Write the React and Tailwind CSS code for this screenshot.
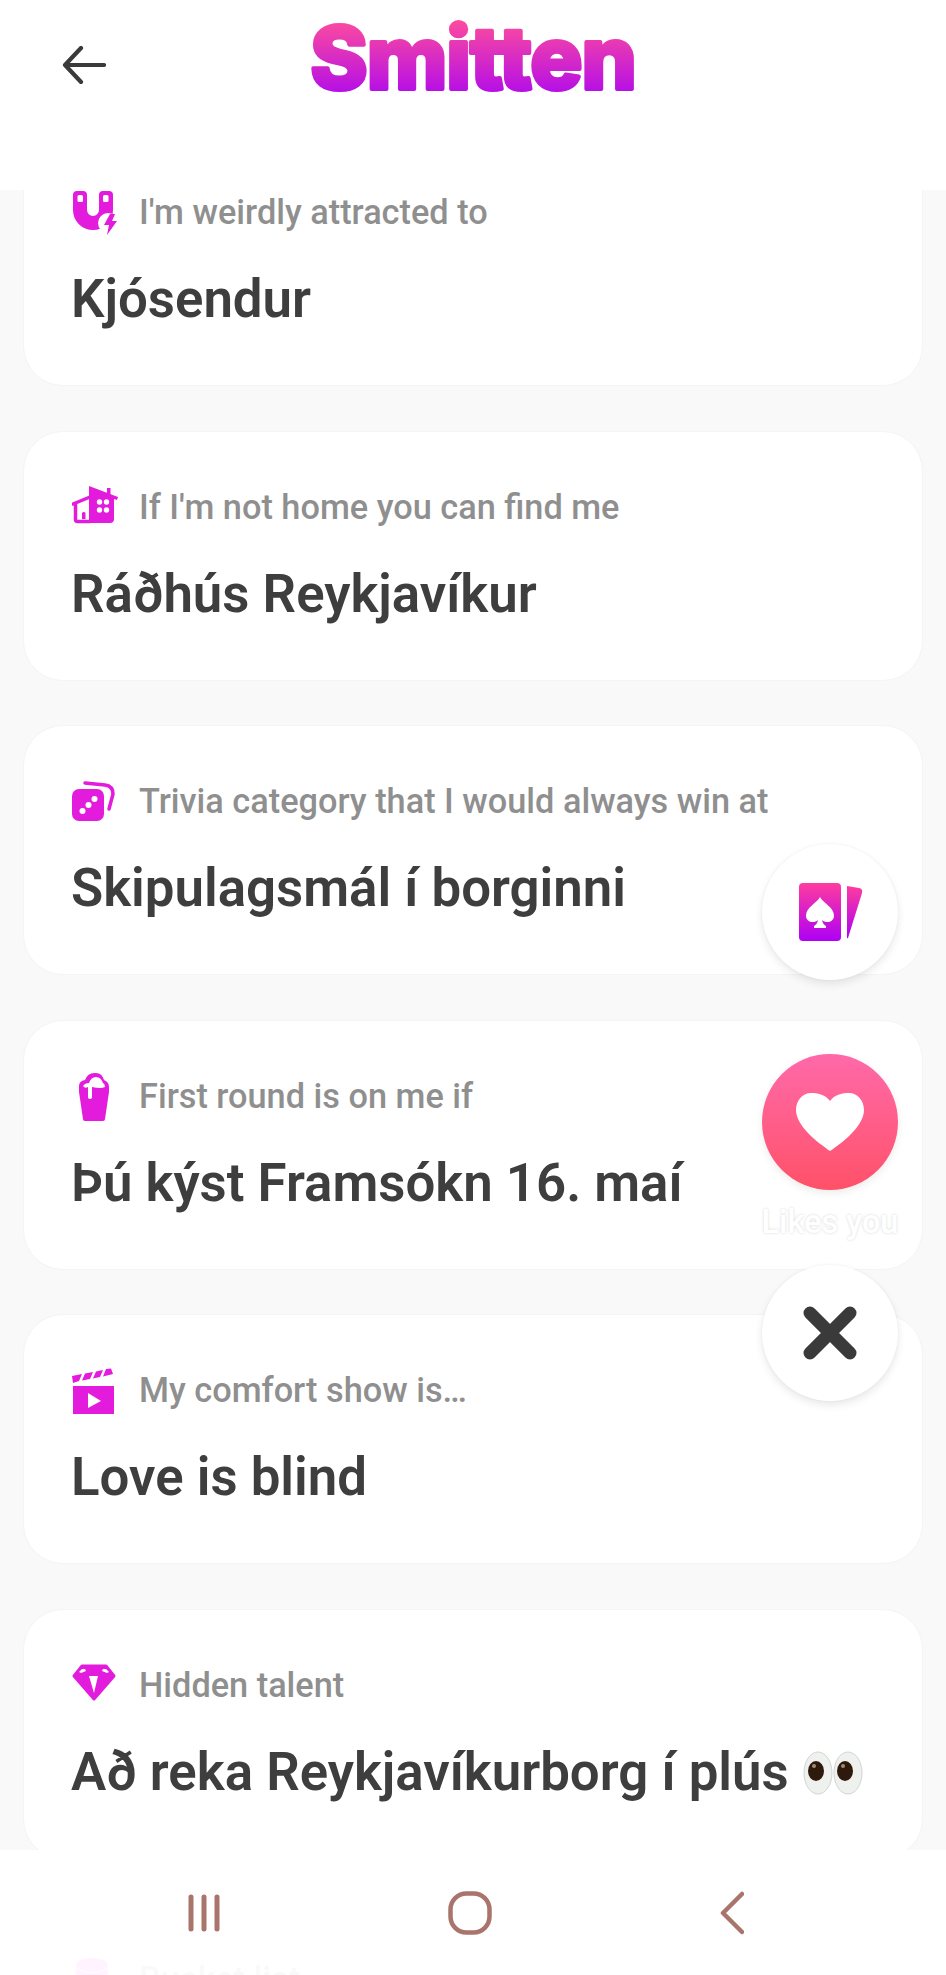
import React from 'react';

const pink = '#e31bdc';

function MagnetIcon() {
  return (
    <svg width="46" height="46" viewBox="0 0 46 46" fill={pink}>
      <path d="M1 5a4 4 0 0 1 4-4h6a4 4 0 0 1 4 4v15a6 6 0 0 0 12 0V5a4 4 0 0 1 4-4h6a4 4 0 0 1 4 4v15a20 20 0 0 1-40 0z" />
      <rect x="5.500" y="5" width="5.500" height="7" rx="1.500" fill="#fff" />
      <rect x="31" y="5" width="5.500" height="7" rx="1.500" fill="#fff" />
      <circle cx="36" cy="33" r="10" fill="#fff" />
      <path d="M38 24l-6 11h5l-2 10 10-14h-5l3-7z" />
    </svg>
  );
}

function HouseIcon() {
  return (
    <svg width="46" height="46" viewBox="0 0 46 46" fill={pink}>
      <path d="M17 1l29 11-1 3-3-1v20a4 4 0 0 1-4 4H17z" />
      <rect x="35" y="3" width="3.500" height="8" />
      <path d="M1 19l17-7M3.500 18v16.500a2 2 0 0 0 2 2H18" fill="none" stroke={pink} strokeWidth="3.500" strokeLinecap="round" />
      <path d="M10 34v-6a2 2 0 0 1 3.500 0v6z" />
      <g fill="#fff">
        <circle cx="27.500" cy="17" r="2.700" />
        <circle cx="34.500" cy="17" r="2.700" />
        <circle cx="27.500" cy="25" r="2.700" />
        <circle cx="34.500" cy="25" r="2.700" />
      </g>
    </svg>
  );
}

function DiceIcon() {
  return (
    <svg width="46" height="46" viewBox="0 0 46 46" fill={pink}>
      <path d="M13 4l20 2q8 1 8 9l-4 15" fill="none" stroke={pink} strokeWidth="3.500" strokeLinecap="round" />
      <rect x="0" y="10" width="32" height="32" rx="7" />
      <g fill="#fff">
        <circle cx="10.500" cy="32" r="3" />
        <circle cx="16.500" cy="26" r="3" />
        <circle cx="22.500" cy="20" r="3" />
      </g>
    </svg>
  );
}

function BeerIcon() {
  return (
    <svg width="31" height="49" viewBox="0 0 31 49" fill={pink} className="ml-[6px]">
      <path d="M1 14q0-5 6-6 3-8 11-7 6 0 8 7 5 2 5 7v5l-4 27q0 2-2 2H7q-2 0-2-2L1 20z" />
      <path d="M5 14q2-3 6-3 2-6 7-6t7 6q2 1 2 4-4 2-13 0v11q-2 2-4 0V15q-3 2-5-1z" fill="#fff" />
    </svg>
  );
}

function ClapperIcon() {
  return (
    <svg width="46" height="46" viewBox="0 0 46 46" fill={pink}>
      <rect x="1" y="18" width="41" height="28" />
      <path d="M16 25l13 8-13 7z" fill="#fff" />
      <path d="M0 8l10-2-3 7-6 2zM13 5.500l8-1.500-3 7-8 1.500zM24 3.500l7-1.500-3 7-7 1.500zM34 1l5-.5 2 5.500-10 2.500z" />
    </svg>
  );
}

function GemIcon() {
  return (
    <svg width="46" height="46" viewBox="0 0 46 46" fill={pink}>
      <path d="M10 3h24l8 10-20 23L2 13z" stroke={pink} strokeWidth="3" strokeLinejoin="round" />
      <g fill="#fff">
        <path d="M10 6h3l1 2-5 2-2-1z" />
        <path d="M31 6h3l3 3-2 1-5-2z" />
        <path d="M17 13h9l-4 17z" />
      </g>
    </svg>
  );
}

function BucketIcon() {
  return (
    <svg width="46" height="46" viewBox="0 0 46 46" fill={pink}>
      <ellipse cx="20" cy="8" rx="16" ry="7" />
      <path d="M4 12q16 8 32 0v26q-16 8-32 0z" />
    </svg>
  );
}

function EyesEmoji() {
  return (
    <svg width="60" height="44" viewBox="0 0 60 44" className="ml-[14px] shrink-0">
      <ellipse cx="15" cy="22" rx="14" ry="21" fill="#eef1ee" stroke="#cfd6d2" />
      <ellipse cx="45" cy="22" rx="14" ry="21" fill="#eef1ee" stroke="#cfd6d2" />
      <ellipse cx="13" cy="20" rx="8" ry="10" fill="#2e1a0c" />
      <ellipse cx="42" cy="20" rx="8" ry="10" fill="#2e1a0c" />
      <circle cx="11" cy="15" r="2" fill="#a78a72" />
      <circle cx="40" cy="15" r="2" fill="#a78a72" />
    </svg>
  );
}

const prompts = [
  { label: "I'm weirdly attracted to", value: 'Kjósendur', icon: <MagnetIcon /> },
  { label: "If I'm not home you can find me", value: 'Ráðhús Reykjavíkur', icon: <HouseIcon /> },
  { label: 'Trivia category that I would always win at', value: 'Skipulagsmál í borginni', icon: <DiceIcon /> },
  { label: 'First round is on me if', value: 'Þú kýst Framsókn 16. maí', icon: <BeerIcon /> },
  { label: 'My comfort show is…', value: 'Love is blind', icon: <ClapperIcon /> },
  { label: 'Hidden talent', value: 'Að reka Reykjavíkurborg í plús', icon: <GemIcon />, emoji: true },
  { label: 'Bucket list', value: '', icon: <BucketIcon /> },
];

function PromptCard({ item }) {
  return (
    <div className="h-[250px] shrink-0 rounded-[40px] border border-[#f4f4f4] bg-white pl-[48px] pr-[47px] pt-[53px]">
      <div className="flex h-[46px] items-center gap-[21px]">
        <div className="flex w-[46px] shrink-0 justify-start">{item.icon}</div>
        <span className="text-[34.300px] font-medium text-[#8f8f8f]">{item.label}</span>
      </div>
      <div className="-ml-px mt-[34px] flex h-[60px] items-center text-[52.800px] font-semibold text-[#3e3e3e]">
        <span>{item.value}</span>
        {item.emoji && <EyesEmoji />}
      </div>
    </div>
  );
}

export default function App() {
  return (
    <div className="relative flex h-[1975px] w-[946px] flex-col overflow-hidden bg-[#f9f9f9] font-['Roboto',sans-serif]">
      {/* Header */}
      <header className="grid h-[190px] shrink-0 grid-cols-[1fr_auto_1fr] bg-white">
        <button className="ml-[62px] mt-[46px] h-[38px] w-[44px]">
          <svg width="44" height="38" viewBox="0 0 44 38" fill="none" stroke="#3a3a3a" strokeWidth="4.200" strokeLinecap="round" strokeLinejoin="round">
            <path d="M42 19H3M19 2L3 19l16 17" />
          </svg>
        </button>
        <svg width="370" height="110" viewBox="0 0 370 110">
          <defs>
            <linearGradient id="logo" gradientUnits="userSpaceOnUse" x1="0" y1="22" x2="0" y2="92">
              <stop offset="0" stopColor="#fb4aa0" />
              <stop offset="1" stopColor="#b60fe6" />
            </linearGradient>
          </defs>
          <text x="185" y="89" textAnchor="middle" fontFamily="Inter, sans-serif" fontWeight="800" fontSize="87" letterSpacing="-1" fill="url(#logo)" stroke="url(#logo)" strokeWidth="4" strokeLinejoin="round">Smitten</text>
        </svg>
        <div />
      </header>

      {/* Prompt list, scrolled */}
      <div className="min-h-0 flex-1 overflow-hidden">
        <div className="-mt-[54px] flex flex-col gap-[44.500px] pl-[23px] pr-[23px]">
          {prompts.map((item) => (
            <PromptCard key={item.label} item={item} />
          ))}
        </div>
      </div>

      {/* Floating actions */}
      <div className="absolute left-[762px] top-[844px] flex w-[136px] flex-col items-center">
        <button className="flex h-[136px] w-[136px] items-center justify-center rounded-full bg-white shadow-[0_4px_8px_rgba(0,0,0,0.09),0_0_3px_rgba(0,0,0,0.05)]">
          <svg width="64" height="58" viewBox="0 0 64 58" className="ml-[2px]">
            <defs>
              <linearGradient id="cards" x1="0" y1="0" x2="0" y2="1">
                <stop offset="0" stopColor="#ff3c9f" />
                <stop offset="1" stopColor="#ae00f5" />
              </linearGradient>
            </defs>
            <path fillRule="evenodd" fill="url(#cards)" d="M4 0h34a4 4 0 0 1 4 4v50a4 4 0 0 1-4 4H4a4 4 0 0 1-4-4V4a4 4 0 0 1 4-4zM21 14c-3 6-14 10-14 19 0 6 8 8 12 4-.5 3-2 5-4 6v2h12v-2c-2-1-3.500-3-4-6 4 4 12 2 12-4 0-9-11-13-14-19z" />
            <path fill="url(#cards)" d="M48 3l12 2q4 .5 3 5L49 55q-1 1-1-1z" />
          </svg>
        </button>
        <button className="mt-[74px] flex h-[136px] w-[136px] items-center justify-center rounded-full bg-gradient-to-b from-[#ff69a9] to-[#ff5068] shadow-[0_3px_8px_rgba(0,0,0,0.08)]">
          <svg width="68" height="58" viewBox="0 0 68 58" fill="#fff">
            <path d="M34 8C29 1 21 0 15 0 6 0 0 8 0 17c0 16 22 33 34 41 12-8 34-25 34-41 0-9-6-17-15-17-6 0-14 1-19 8z" />
          </svg>
        </button>
        <span className="mt-[14px] whitespace-nowrap text-[32.500px] font-medium leading-[36px] text-white [text-shadow:0_0_3px_rgba(0,0,0,0.16)]">Likes you</span>
        <button className="mt-[25px] flex h-[136px] w-[136px] items-center justify-center rounded-full bg-white shadow-[0_4px_8px_rgba(0,0,0,0.09),0_0_3px_rgba(0,0,0,0.05)]">
          <svg width="56" height="56" viewBox="0 0 56 56" fill="none" stroke="#3a3a3a" strokeWidth="13" strokeLinecap="round">
            <path d="M8 8l40 40M48 8L8 48" />
          </svg>
        </button>
      </div>

      {/* System navigation bar */}
      <nav className="absolute inset-x-0 bottom-0 flex h-[125px] items-center bg-white/95">
        <div className="flex w-full items-center justify-between pl-[188px] pr-[202px]">
          <svg width="32" height="38" viewBox="0 0 32 38" fill="none" stroke="#a9746b" strokeWidth="5" strokeLinecap="round">
            <path d="M3 3v32M16 3v32M29 3v32" />
          </svg>
          <svg width="44" height="44" viewBox="0 0 44 44" fill="none" stroke="#a9746b" strokeWidth="4.500">
            <rect x="2.500" y="2.500" width="39" height="39" rx="16" />
          </svg>
          <svg width="24" height="44" viewBox="0 0 24 44" fill="none" stroke="#a9746b" strokeWidth="4.500" strokeLinecap="round" strokeLinejoin="round">
            <path d="M22 3L3 22l19 19" />
          </svg>
        </div>
      </nav>
    </div>
  );
}
